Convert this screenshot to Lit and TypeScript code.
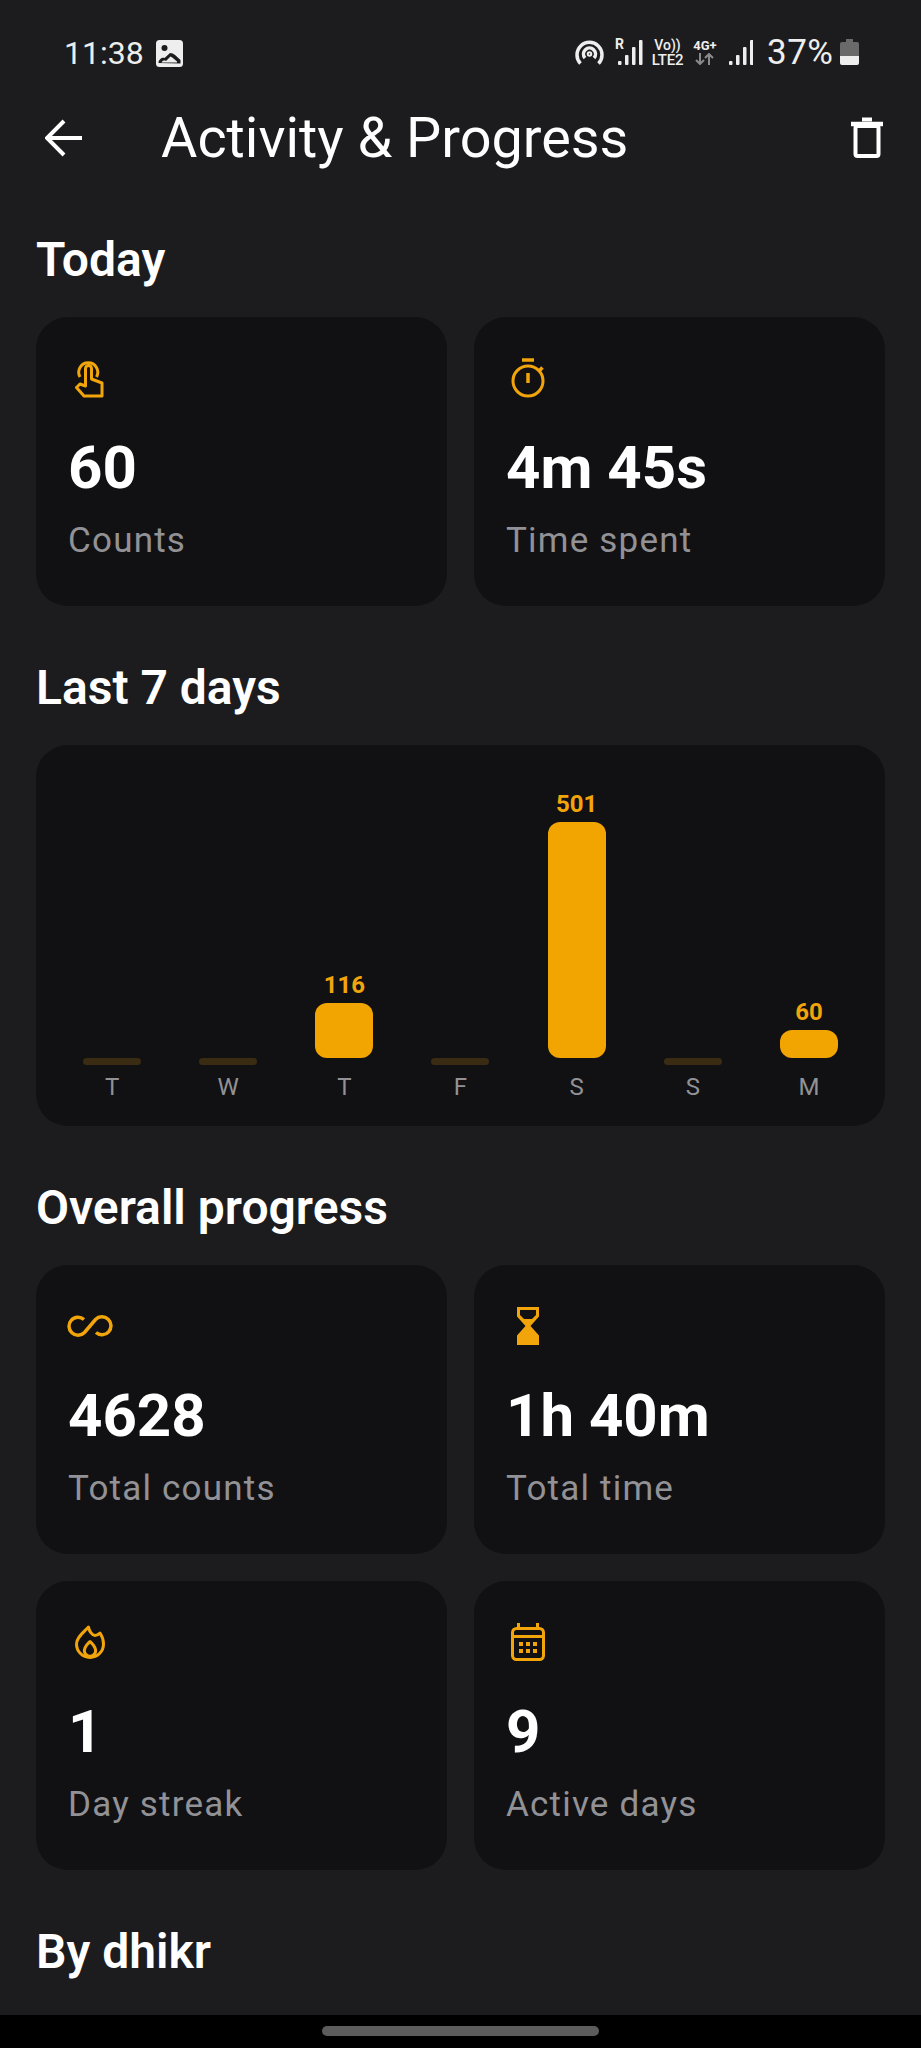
import { LitElement, css, html, svg } from 'lit';
import { customElement } from 'lit/decorators.js';

const icons = {
  touch: html`<svg class="ico thin" width="30" height="40" viewBox="0 0 30 40"><path d="M5 19a9.500 9.500 0 1 1 16.500 0" /><path d="M1.500 29.500l3.500-3.500 5.500 2V10.500a3 3 0 0 1 6 0V21l10.500 4V38H9z" stroke-linejoin="round" /></svg>`,
  timer: html`<svg class="ico thin" width="34" height="40" viewBox="0 0 34 40"><circle cx="17" cy="23" r="15" /><path d="M11 2h12M17 15v10M28 13l3.500-3.500" stroke-width="3.500" /></svg>`,
  infinity: html`<svg class="ico" width="46" height="22" viewBox="0 0 46 22"><path d="M17 4.500A9 9 0 1 0 17.500 17.500L28.500 4.500A9 9 0 1 1 29 17.500" /></svg>`,
  hourglass: html`<svg class="fill" width="22" height="38" viewBox="0 0 22 38"><path fill-rule="evenodd" d="M0 0H22V9.500L13.500 19 22 28.500V38H0V28.500L8.500 19 0 9.500ZM3 3V8L7 12H15L19 8V3Z" /></svg>`,
  flame: html`<svg class="ico thin" width="30" height="36" viewBox="0 0 30 36"><path d="M13.500 3C14 7 17 11 20 11.500 22 11.500 24 10 25 9 27 12 28.500 16 28.500 20A13.500 13.500 0 0 1 1.500 20C1.500 13 9 8 13.500 3Z" stroke-linejoin="round" /><path d="M15 17.500C12 20.500 8.500 23.500 9.500 28A5.700 5.700 0 0 0 20.500 28C21.500 23.500 18 20.500 15 17.500Z" stroke-linejoin="round" /></svg>`,
  calendar: html`<svg class="ico thin" width="34" height="38" viewBox="0 0 34 38"><rect x="1.500" y="5.500" width="31" height="31" rx="4" /><path d="M1.500 13.500h31M7.500 0v5M26.500 0v5" /><path class="dots" d="M8 19h4v4H8zM15 19h4v4h-4zM22 19h4v4h-4zM8 26h4v4H8zM15 26h4v4h-4zM22 26h4v4h-4z" /></svg>`,
};

const cellBars = (heights: number[]) =>
  heights.map(
    (h, i) => svg`<rect x=${i * 7} y=${26 - h} width="3.500" height=${h} rx="1" />`
  );

const days = [
  { day: 'T', value: 0 },
  { day: 'W', value: 0 },
  { day: 'T', value: 116 },
  { day: 'F', value: 0 },
  { day: 'S', value: 501 },
  { day: 'S', value: 0 },
  { day: 'M', value: 60 },
];

@customElement('app-root')
export class AppRoot extends LitElement {
  static styles = css`
    :host {
      display: block;
      width: 921px;
      height: 2048px;
      overflow: hidden;
      background: #1c1c1e;
      font-family: Roboto, 'Noto Sans', sans-serif;
      color: #fff;
      position: relative;
    }

    .status {
      height: 80px;
      box-sizing: border-box;
      padding: 35px 0 0 64px;
      display: flex;
      align-items: flex-start;
      color: #eeeeee;
      font-size: 32px;
      line-height: 36px;
    }
    .clock {
      width: 92px;
    }
    .gallery {
      margin-top: 5px;
    }
    .status-right {
      margin-left: auto;
      margin-right: 62px;
      display: flex;
      align-items: flex-start;
    }
    .status svg {
      fill: #eeeeee;
      flex: none;
    }
    .hotspot {
      margin: 4px 12px 0 0;
    }
    .hotspot path,
    .hotspot circle {
      fill: none;
      stroke: #eeeeee;
      stroke-width: 3.5;
    }
    .sim1 {
      position: relative;
      width: 28px;
      height: 30px;
      margin-right: 6px;
      flex: none;
    }
    .sim1 svg {
      position: absolute;
      left: 2px;
      top: 4px;
    }
    .sim-r {
      position: absolute;
      left: -1px;
      top: 2px;
      font-size: 14px;
      line-height: 15px;
      font-weight: 700;
    }
    .stack {
      display: flex;
      flex-direction: column;
      align-items: center;
      font-weight: 500;
      margin-top: 3px;
    }
    .volte {
      width: 35px;
      margin-right: 7px;
    }
    .volte .top {
      font-size: 14px;
      line-height: 14px;
    }
    .volte .bottom {
      font-size: 15px;
      line-height: 15px;
      margin-top: 1px;
      letter-spacing: -0.2px;
    }
    .net {
      width: 26px;
      margin-right: 11px;
    }
    .net .top {
      font-size: 13px;
      line-height: 15px;
      font-weight: 700;
    }
    .status .net svg {
      fill: none;
      stroke: #8a8a8a;
      stroke-width: 2;
    }
    .sim2 {
      margin: 4px 14px 0 0;
    }
    .pct {
      width: 73px;
      font-size: 35px;
      letter-spacing: 0.5px;
    }
    .battery {
      margin-top: 4px;
    }

    .bar {
      height: 115px;
      box-sizing: border-box;
      padding-left: 45px;
      padding-right: 38px;
      display: flex;
      align-items: center;
    }
    .title {
      margin-left: 78px;
      font-size: 55.8px;
      line-height: 64px;
      font-weight: 400;
      flex: 1;
    }
    .back {
      fill: none;
      stroke: #fff;
      stroke-width: 4;
    }
    .trash {
      fill: none;
      stroke: #fff;
    }

    main {
      padding: 0 36px;
    }
    h2 {
      margin: 0;
      font-size: 48px;
      line-height: 56px;
      font-weight: 600;
      height: 139px;
      box-sizing: border-box;
      padding-top: 54px;
    }
    h2.first {
      height: 122px;
      padding-top: 37px;
    }
    .grid {
      display: grid;
      grid-template-columns: 1fr 1fr;
      gap: 27px;
    }
    .card {
      height: 289px;
      box-sizing: border-box;
      background: #111113;
      border-radius: 32px;
      padding: 0 32px;
      display: flex;
      flex-direction: column;
    }
    .icon-slot {
      width: 44px;
      height: 40px;
      margin-top: 41px;
      display: flex;
      align-items: center;
      justify-content: center;
    }
    .value {
      margin-top: 35px;
      font-size: 60px;
      line-height: 70px;
      font-weight: 700;
    }
    .label {
      margin-top: 18px;
      font-size: 35px;
      line-height: 40px;
      color: #929296;
      letter-spacing: 1.2px;
    }
    .ico {
      fill: none;
      stroke: #f2a50b;
      stroke-width: 3.5;
      display: block;
      flex: none;
    }
    .ico.thin {
      stroke-width: 3;
    }
    .ico .dots {
      fill: #f2a50b;
      stroke: none;
    }
    .fill {
      fill: #f2a50b;
      display: block;
      flex: none;
    }

    .chart {
      height: 381px;
      box-sizing: border-box;
      background: #111113;
      border-radius: 32px;
      padding: 0 18px;
      display: grid;
      grid-template-columns: repeat(7, 1fr);
    }
    .col {
      display: flex;
      flex-direction: column;
      align-items: center;
      justify-content: flex-end;
      padding-bottom: 25px;
    }
    .num {
      font-size: 24px;
      line-height: 26px;
      font-weight: 700;
      color: #f2a50b;
      margin-bottom: 5px;
    }
    .col-bar {
      width: 58px;
      background: #f2a500;
      border-radius: 12px;
      margin-bottom: 7px;
    }
    .col-bar.empty {
      height: 7px;
      margin-bottom: 0;
      background: #3a2c12;
      border-radius: 4px;
    }
    .day {
      margin-top: 8px;
      font-size: 24px;
      line-height: 28px;
      color: #929296;
    }

    .nav {
      position: absolute;
      left: 0;
      right: 0;
      top: 2015px;
      height: 33px;
      background: #000;
      display: flex;
      justify-content: center;
      padding-top: 11px;
      box-sizing: border-box;
    }
    .pill {
      width: 277px;
      height: 10px;
      background: #5c5c5c;
      border-radius: 5px;
    }
  `;

  private card(icon: unknown, value: string, label: string) {
    return html`<div class="card">
      <div class="icon-slot">${icon}</div>
      <div class="value">${value}</div>
      <div class="label">${label}</div>
    </div>`;
  }

  private column(d: { day: string; value: number }) {
    const h = Math.round((d.value / 501) * 236);
    return html`<div class="col">
      ${d.value
        ? html`<div class="num">${d.value}</div>
            <div class="col-bar" style="height:${h}px"></div>`
        : html`<div class="col-bar empty"></div>`}
      <div class="day">${d.day}</div>
    </div>`;
  }

  render() {
    return html`
      <div class="status">
        <span class="clock">11:38</span>
        <svg class="gallery" width="27" height="27" viewBox="0 0 27 27">
          <rect width="27" height="27" rx="3.500" />
          <circle cx="8.500" cy="8" r="3" fill="#1c1c1e" />
          <path d="M2.500 23c0-4 4-6 6-5l5.500-5c4 0 6 3 10.500 7v3.500z" fill="#1c1c1e" />
          <path d="M5.500 22.500c1-2 3-2.500 4.500-1.500l4.500-4.500c2.500 1 4 3 6.500 5v1z" />
        </svg>
        <div class="status-right">
          <svg class="hotspot" width="29" height="26" viewBox="0 0 29 26">
            <path d="M5.500 24.500a12.500 12.500 0 1 1 18 0" />
            <path d="M10 19a6 6 0 1 1 9 0" />
            <circle cx="14.500" cy="15" r="1" />
          </svg>
          <div class="sim1">
            <svg width="26" height="26" viewBox="0 0 26 26">${cellBars([4, 10, 18, 25])}</svg>
            <span class="sim-r">R</span>
          </div>
          <div class="stack volte">
            <span class="top">Vo))</span><span class="bottom">LTE2</span>
          </div>
          <div class="stack net">
            <span class="top">4G+</span>
            <svg width="20" height="12" viewBox="0 0 20 12">
              <path d="M5 0v11M1 7l4 4 4-4M14 12V1M10 5l4-4 4 4" />
            </svg>
          </div>
          <svg class="sim2" width="24" height="26" viewBox="0 0 24 26">
            ${cellBars([4, 10, 18, 25])}
          </svg>
          <span class="pct">37%</span>
          <svg class="battery" width="19" height="26" viewBox="0 0 19 26">
            <path d="M6 0h7v3h4a2 2 0 0 1 2 2v12H0V5a2 2 0 0 1 2-2h4z" fill="#6a6a6a" />
            <path d="M0 17h19v7a2 2 0 0 1-2 2H2a2 2 0 0 1-2-2z" />
          </svg>
        </div>
      </div>

      <div class="bar">
        <svg class="back" width="38" height="38" viewBox="0 0 38 38">
          <path d="M37 19H3M19 2L2 19l17 17" />
        </svg>
        <div class="title">Activity &amp; Progress</div>
        <svg class="trash" width="32" height="41" viewBox="0 0 32 41">
          <path d="M0 7h32" stroke-width="4.500" />
          <path d="M11 2.500h10" stroke-width="4" />
          <rect x="4.500" y="9" width="23" height="30" rx="2" stroke-width="4" />
        </svg>
      </div>

      <main>
        <h2 class="first">Today</h2>
        <div class="grid">
          ${this.card(icons.touch, '60', 'Counts')}
          ${this.card(icons.timer, '4m 45s', 'Time spent')}
        </div>
        <h2>Last 7 days</h2>
        <div class="chart">${days.map((d) => this.column(d))}</div>
        <h2>Overall progress</h2>
        <div class="grid">
          ${this.card(icons.infinity, '4628', 'Total counts')}
          ${this.card(icons.hourglass, '1h 40m', 'Total time')}
          ${this.card(icons.flame, '1', 'Day streak')}
          ${this.card(icons.calendar, '9', 'Active days')}
        </div>
        <h2>By dhikr</h2>
      </main>

      <div class="nav"><div class="pill"></div></div>
    `;
  }
}
